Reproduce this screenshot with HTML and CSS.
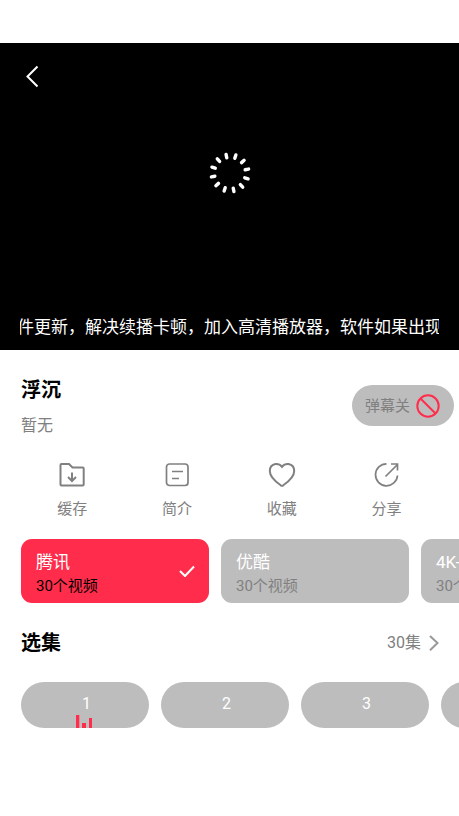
FILE: index.html
```html
<!DOCTYPE html>
<html lang="zh-CN">
<head>
<meta charset="utf-8">
<meta name="viewport" content="width=device-width, initial-scale=1">
<title>浮沉</title>
<link rel="stylesheet" href="styles.css">
</head>
<body>
<header class="player">
  <button class="back" type="button" aria-label="返回">
    <svg width="24" height="24" viewBox="0 0 24 24"><path d="M17.500 2.500 7.500 12.500 17.500 22.500"/></svg>
  </button>
  <svg class="spinner" viewBox="-24 -24 48 48" role="img" aria-label="加载中">
    <g transform="rotate(-12)">
      <path id="tick" d="M0-19V-15.500"/>
      <use href="#tick" transform="rotate(30)"/>
      <use href="#tick" transform="rotate(60)"/>
      <use href="#tick" transform="rotate(90)"/>
      <use href="#tick" transform="rotate(120)"/>
      <use href="#tick" transform="rotate(150)"/>
      <use href="#tick" transform="rotate(180)"/>
      <use href="#tick" transform="rotate(210)"/>
      <use href="#tick" transform="rotate(240)"/>
      <use href="#tick" transform="rotate(270)"/>
      <use href="#tick" transform="rotate(300)"/>
      <use href="#tick" transform="rotate(330)"/>
    </g>
  </svg>
  <p class="notice"><span>软件更新，解决续播卡顿，加入高清播放器，软件如果出现问</span></p>
</header>
<main>
  <section class="intro">
    <div>
      <h1>浮沉</h1>
      <p class="summary">暂无</p>
    </div>
    <button class="danmaku" type="button">弹幕关
      <svg width="24" height="24" viewBox="0 0 24 24"><circle cx="12" cy="12" r="10.700"/><path d="M4.500 4.500 19.500 19.500"/></svg>
    </button>
  </section>
  <nav class="actions">
    <button type="button">
      <svg width="28" height="28" viewBox="0 0 28 28"><path d="M3.500 3h7.500l3.500 3.500h10.200q1 0 1 1V23.500q0 1-1 1H3.500q-1 0-1-1V4q0-1 1-1ZM14 11.500V20M10 16l4 4 4-4" stroke-width="2"/></svg>
      <span>缓存</span>
    </button>
    <button type="button">
      <svg width="28" height="28" viewBox="0 0 28 28"><rect x="3.500" y="3" width="21.500" height="21.500" rx="3"/><path d="M9 10.500H20M9 17.500H16"/></svg>
      <span>简介</span>
    </button>
    <button type="button">
      <svg width="28" height="28" viewBox="0 0 28 28"><path d="M14 5.800C12 3.200 9.500 2.800 7.500 3 4 3.600 1.800 6.500 1.800 10c0 6 6.200 11 10.900 14.300q1.300.8 2.600 0C20 21 26.200 16 26.200 10c0-3.500-2.200-6.400-5.700-7C18.500 2.800 16 3.200 14 5.800Z" stroke-width="2"/></svg>
      <span>收藏</span>
    </button>
    <button type="button">
      <svg width="28" height="28" viewBox="0 0 28 28"><path d="M13.500 2.800A11 11 0 1 0 24.500 14.500M12.500 15.500 24.500 3.500M18 3H24.500V9.500"/></svg>
      <span>分享</span>
    </button>
  </nav>
  <div class="scroller sources">
    <button class="source selected" type="button">
      <span class="label"><span class="name">腾讯</span><span class="count">30个视频</span></span>
      <svg width="16" height="12" viewBox="0 0 16 12"><path d="M1 6 6 11 15 1.500"/></svg>
    </button>
    <button class="source" type="button">
      <span class="label"><span class="name">优酷</span><span class="count">30个视频</span></span>
    </button>
    <button class="source" type="button">
      <span class="label"><span class="name">4K-1</span><span class="count">30个视频</span></span>
    </button>
  </div>
  <section class="episodes-head">
    <h2>选集</h2>
    <a class="all" href="#episodes">30集
      <svg width="10" height="16" viewBox="0 0 10 16"><path d="M1 1 8.500 8 1 15.200"/></svg>
    </a>
  </section>
  <div class="scroller episodes" id="episodes">
    <button class="episode" type="button">1
      <svg class="playing" width="16" height="13" viewBox="0 0 16 13"><path d="M0 0h3.300v13H0zM6 8h4v5H6zM13 3h3v10h-3z"/></svg>
    </button>
    <button class="episode" type="button">2</button>
    <button class="episode" type="button">3</button>
    <button class="episode" type="button">4</button>
  </div>
</main>
</body>
</html>
```

FILE: styles.css
```css
* {
  box-sizing: border-box;
}

body {
  margin: 0;
  padding-top: 43px;
  background: #fff;
  color: #808080;
  font-family: Roboto, "Noto Sans CJK SC", sans-serif;
  font-size: 15px;
  line-height: 24px;
}

h1,
h2,
p {
  margin: 0;
}

h1,
h2 {
  color: #000;
  font-size: 20px;
  font-weight: 700;
  line-height: 32px;
}

button {
  padding: 0;
  border: 0;
  background: none;
  color: inherit;
  font: inherit;
}

svg {
  display: block;
  flex: none;
  fill: none;
  stroke: currentColor;
  stroke-width: 2;
}

.player {
  display: flex;
  flex-direction: column;
  justify-content: space-between;
  height: 307px;
  padding: 21px 20px 11px;
  background: #000;
  color: #fff;
}

.back {
  align-self: flex-start;
}

.spinner {
  width: 48px;
  align-self: center;
  margin-bottom: 58px;
  stroke-width: 3.4;
  stroke-linecap: round;
}

.notice {
  display: flex;
  justify-content: center;
  overflow: hidden;
  font-size: 17px;
  white-space: nowrap;
}

.intro {
  display: flex;
  align-items: flex-start;
  justify-content: space-between;
  padding: 24px 5px 0 21px;
}

.summary {
  margin-top: 8px;
  font-size: 16px;
}

.danmaku {
  display: flex;
  align-items: center;
  gap: 6px;
  height: 41px;
  margin-top: 11px;
  padding: 0 14px 0 13px;
  border-radius: 21px;
  background: #bdbdbd;
}

.danmaku svg {
  color: #ff2d4b;
}

.actions {
  display: grid;
  grid-template-columns: repeat(4, 1fr);
  padding: 23px 20px 18px;
}

.actions button {
  display: flex;
  flex-direction: column;
  align-items: center;
  gap: 8px;
}

.actions svg {
  stroke-width: 1.7;
}

.scroller {
  display: flex;
  gap: 12px;
  padding-left: 21px;
  overflow: hidden;
}

.source {
  display: flex;
  flex: none;
  align-items: center;
  justify-content: space-between;
  width: 188px;
  height: 64px;
  padding: 0 14px 0 15px;
  border-radius: 11px;
  background: #bdbdbd;
  text-align: left;
}

.label {
  display: flex;
  flex-direction: column;
  padding-top: 6px;
}

.name {
  color: #fff;
  font-size: 17px;
}

.selected {
  background: #ff2d4b;
  color: #000;
}

.selected svg {
  color: #fff;
}

.episodes-head {
  display: flex;
  align-items: center;
  justify-content: space-between;
  padding: 24px 20px 23px 21px;
}

.all {
  display: flex;
  align-items: center;
  gap: 8px;
  color: inherit;
  font-size: 16px;
  text-decoration: none;
}

.all svg {
  color: #999;
}

.episode {
  position: relative;
  flex: none;
  width: 128px;
  height: 46px;
  padding: 0 0 3px 3px;
  border-radius: 23px;
  background: #bdbdbd;
  color: #fff;
  font-size: 16px;
}

.playing {
  position: absolute;
  bottom: 0;
  left: 55px;
  fill: #ff2d4b;
  stroke: none;
}
```
